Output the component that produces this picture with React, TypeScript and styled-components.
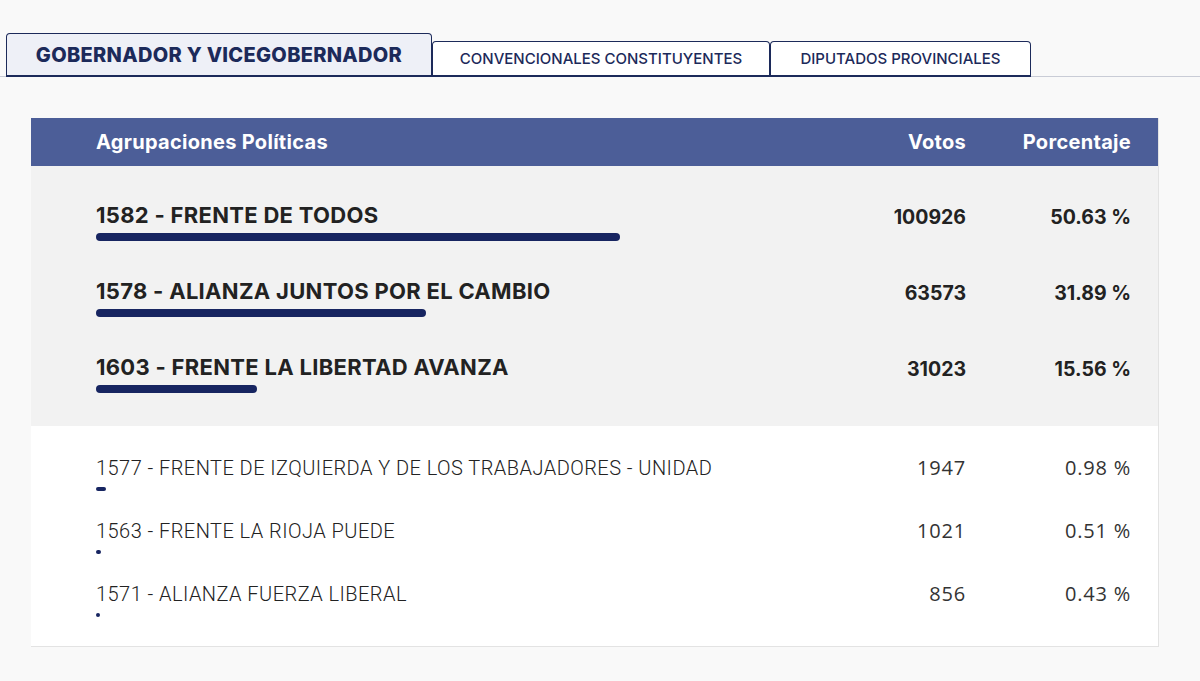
import styled, { createGlobalStyle } from 'styled-components';

const GlobalStyle = createGlobalStyle`
  body {
    margin: 0;
    background-color: #f9f9f9;
    font-family: Inter, 'Open Sans', sans-serif;
  }
`;

const NAVY = '#172561';
const BAR_FULL = 1035;

const Page = styled.main`
  width: 100%;
  min-height: 100vh;
  padding-top: 33px;
  box-sizing: border-box;
`;

const TabList = styled.nav`
  display: flex;
  align-items: flex-end;
  padding-left: 6px;
  border-bottom: 1px solid #c9ccd6;
`;

const Tab = styled.button<{ $active?: boolean; $width: number }>`
  display: flex;
  align-items: center;
  justify-content: center;
  width: ${({ $width }) => $width}px;
  height: ${({ $active }) => ($active ? 44 : 36)}px;
  margin-bottom: -1px;
  box-sizing: border-box;
  border: 1px solid #1c2a5a;
  border-width: ${({ $active }) => ($active ? '1.5px 1.5px 2px 1.5px' : '1px 1px 2px 1px')};
  border-radius: 4px 4px 0 0;
  background-color: ${({ $active }) => ($active ? '#eef0f7' : '#ffffff')};
  color: #1c2a5a;
  font-family: Inter, sans-serif;
  font-size: ${({ $active }) => ($active ? 20 : 15)}px;
  font-weight: ${({ $active }) => ($active ? 800 : 500)};
  letter-spacing: ${({ $active }) => ($active ? '0.3px' : '0')};
  padding: 0;
  cursor: pointer;
`;

const Card = styled.section`
  width: 1127px;
  margin: 41px 0 0 31px;
  background-color: #ffffff;
  border-right: 1px solid #e3e3e3;
  border-bottom: 1px solid #e3e3e3;
`;

const Grid = styled.div`
  display: grid;
  grid-template-columns: 1fr 120px 165px;
  padding: 0 27px 0 65px;
`;

const Header = styled(Grid)`
  height: 48px;
  align-items: center;
  background-color: #4c5e98;
  color: #ffffff;
  font-size: 20px;
  font-weight: 700;
  letter-spacing: 0.3px;
`;

const HeadCell = styled.div<{ $right?: boolean }>`
  text-align: ${({ $right }) => ($right ? 'right' : 'left')};
`;

const Section = styled.div<{ $major?: boolean }>`
  background-color: ${({ $major }) => ($major ? '#f2f2f2' : '#ffffff')};
  padding: ${({ $major }) => ($major ? '34px 0 33px' : '30px 0 29px')};
  display: flex;
  flex-direction: column;
  gap: ${({ $major }) => ($major ? 35 : 28)}px;
`;

const Row = styled(Grid)<{ $major?: boolean }>`
  align-items: start;
  color: #222222;
  font-size: ${({ $major }) => ($major ? 22 : 20)}px;
  font-weight: ${({ $major }) => ($major ? 700 : 300)};
  font-family: ${({ $major }) => ($major ? 'Inter, sans-serif' : "Roboto, 'Open Sans', sans-serif")};
`;

const NameCell = styled.div`
  display: flex;
  flex-direction: column;
  align-items: flex-start;
`;

const Name = styled.span<{ $major?: boolean }>`
  line-height: ${({ $major }) => ($major ? 30 : 24)}px;
  letter-spacing: ${({ $major }) => ($major ? '0.3px' : '0.45px')};
  white-space: nowrap;
`;

const Bar = styled.div<{ $major?: boolean }>`
  margin-top: ${({ $major }) => ($major ? 3 : 7)}px;
  height: ${({ $major }) => ($major ? 8 : 4)}px;
  min-width: 3px;
  border-radius: 4px;
  background-color: ${NAVY};
`;

const NumCell = styled.div<{ $major?: boolean }>`
  text-align: right;
  line-height: ${({ $major }) => ($major ? 30 : 24)}px;
  font-size: ${({ $major }) => ($major ? 19.5 : 20)}px;
  font-family: ${({ $major }) => ($major ? 'Inter, sans-serif' : "'Open Sans', sans-serif")};
  font-weight: ${({ $major }) => ($major ? 700 : 400)};
  letter-spacing: ${({ $major }) => ($major ? '0' : '0.8px')};
  color: ${({ $major }) => ($major ? '#222' : '#333')};
  padding-top: ${({ $major }) => ($major ? 2 : 0)}px;
`;

const results = [
  { name: '1582 - FRENTE DE TODOS', votes: 100926, pct: 50.63 },
  { name: '1578 - ALIANZA JUNTOS POR EL CAMBIO', votes: 63573, pct: 31.89 },
  { name: '1603 - FRENTE LA LIBERTAD AVANZA', votes: 31023, pct: 15.56 },
  { name: '1577 - FRENTE DE IZQUIERDA Y DE LOS TRABAJADORES - UNIDAD', votes: 1947, pct: 0.98 },
  { name: '1563 - FRENTE LA RIOJA PUEDE', votes: 1021, pct: 0.51 },
  { name: '1571 - ALIANZA FUERZA LIBERAL', votes: 856, pct: 0.43 },
];

const tabs = [
  { label: 'GOBERNADOR Y VICEGOBERNADOR', width: 426 },
  { label: 'CONVENCIONALES CONSTITUYENTES', width: 338 },
  { label: 'DIPUTADOS PROVINCIALES', width: 261 },
];

function ResultRow({ r, major }: { r: (typeof results)[number]; major?: boolean }) {
  return (
    <Row $major={major}>
      <NameCell>
        <Name $major={major}>{r.name}</Name>
        <Bar $major={major} style={{ width: `${Math.round((BAR_FULL * r.pct) / 100)}px` }} />
      </NameCell>
      <NumCell $major={major}>{r.votes}</NumCell>
      <NumCell $major={major}>{r.pct.toFixed(2)} %</NumCell>
    </Row>
  );
}

export default function App() {
  return (
    <Page>
      <GlobalStyle />
      <TabList>
        {tabs.map((t, i) => (
          <Tab key={t.label} $active={i === 0} $width={t.width}>
            {t.label}
          </Tab>
        ))}
      </TabList>
      <Card>
        <Header>
          <HeadCell>Agrupaciones Políticas</HeadCell>
          <HeadCell $right>Votos</HeadCell>
          <HeadCell $right>Porcentaje</HeadCell>
        </Header>
        <Section $major>
          {results.slice(0, 3).map((r) => (
            <ResultRow key={r.name} r={r} major />
          ))}
        </Section>
        <Section>
          {results.slice(3).map((r) => (
            <ResultRow key={r.name} r={r} />
          ))}
        </Section>
      </Card>
    </Page>
  );
}
